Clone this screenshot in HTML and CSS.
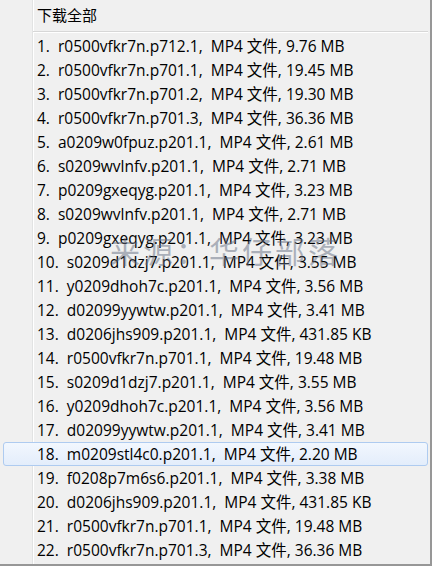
FILE: index.html
```html
<!DOCTYPE html>
<html lang="zh-CN">
<head>
    <meta charset="UTF-8">
    <title>下载全部</title>
    <link rel="stylesheet" href="styles.css">
</head>
<body>
    <div id="menu">
        <div class="head">下载全部</div>
        <div class="sep"></div>
        <ul class="list">
            <li>1.  r0500vfkr7n.p712.1,  MP4 文件, 9.76 MB</li>
            <li>2.  r0500vfkr7n.p701.1,  MP4 文件, 19.45 MB</li>
            <li>3.  r0500vfkr7n.p701.2,  MP4 文件, 19.30 MB</li>
            <li>4.  r0500vfkr7n.p701.3,  MP4 文件, 36.36 MB</li>
            <li>5.  a0209w0fpuz.p201.1,  MP4 文件, 2.61 MB</li>
            <li>6.  s0209wvlnfv.p201.1,  MP4 文件, 2.71 MB</li>
            <li>7.  p0209gxeqyg.p201.1,  MP4 文件, 3.23 MB</li>
            <li>8.  s0209wvlnfv.p201.1,  MP4 文件, 2.71 MB</li>
            <li>9.  p0209gxeqyg.p201.1,  MP4 文件, 3.23 MB</li>
            <li>10.  s0209d1dzj7.p201.1,  MP4 文件, 3.55 MB</li>
            <li>11.  y0209dhoh7c.p201.1,  MP4 文件, 3.56 MB</li>
            <li>12.  d02099yywtw.p201.1,  MP4 文件, 3.41 MB</li>
            <li>13.  d0206jhs909.p201.1,  MP4 文件, 431.85 KB</li>
            <li>14.  r0500vfkr7n.p701.1,  MP4 文件, 19.48 MB</li>
            <li>15.  s0209d1dzj7.p201.1,  MP4 文件, 3.55 MB</li>
            <li>16.  y0209dhoh7c.p201.1,  MP4 文件, 3.56 MB</li>
            <li>17.  d02099yywtw.p201.1,  MP4 文件, 3.41 MB</li>
            <li class="hover">18.  m0209stl4c0.p201.1,  MP4 文件, 2.20 MB</li>
            <li>19.  f0208p7m6s6.p201.1,  MP4 文件, 3.38 MB</li>
            <li>20.  d0206jhs909.p201.1,  MP4 文件, 431.85 KB</li>
            <li>21.  r0500vfkr7n.p701.1,  MP4 文件, 19.48 MB</li>
            <li>22.  r0500vfkr7n.p701.3,  MP4 文件, 36.36 MB</li>
        </ul>
        <div class="mark">来源：华仔部落</div>
    </div>
</body>
</html>
```

FILE: styles.css
```css
body{
    margin:0;
    background:#f0f0f0;
}
#menu{
    width:432px;
    height:566px;
    box-sizing:border-box;
    border-right:2px solid #979797;
    border-bottom:2px solid #979797;
    background:#f0f0f0 linear-gradient(to right, transparent 32px, #e2e3e3 32px, #e2e3e3 33px, #fff 33px, #fff 34px, transparent 34px);
    font-family:"Open Sans","Noto Sans CJK SC",sans-serif;
    font-size:15.5px;
    color:#000;
    position:relative;
    overflow:hidden;
}
#menu .head{
    height:31px;
    line-height:30px;
    padding-left:37px;
    font-size:15px;
    font-family:"Noto Sans CJK SC",sans-serif;
}
#menu .sep{
    margin:0 2px 1px 33px;
    border-top:1px solid #d7d7d7;
    border-bottom:1px solid #fff;
}
#menu .list{
    list-style:none;
    margin:0;
    padding:0;
}
#menu .list li{
    height:22px;
    line-height:22px;
    margin:0 2px 0 3px;
    padding-left:33px;
    border:1px solid transparent;
    border-radius:3px;
    white-space:pre;
}
#menu .list li.hover{
    border-color:#aecbf0;
    background:linear-gradient(#f2f7fe, #e3edfb);
}
#menu .mark{
    position:absolute;
    left:110px;
    top:228px;
    font-family:"Noto Sans CJK SC",serif;
    font-size:30px;
    letter-spacing:3px;
    color:rgba(100,110,130,0.5);
    pointer-events:none;
}
```
